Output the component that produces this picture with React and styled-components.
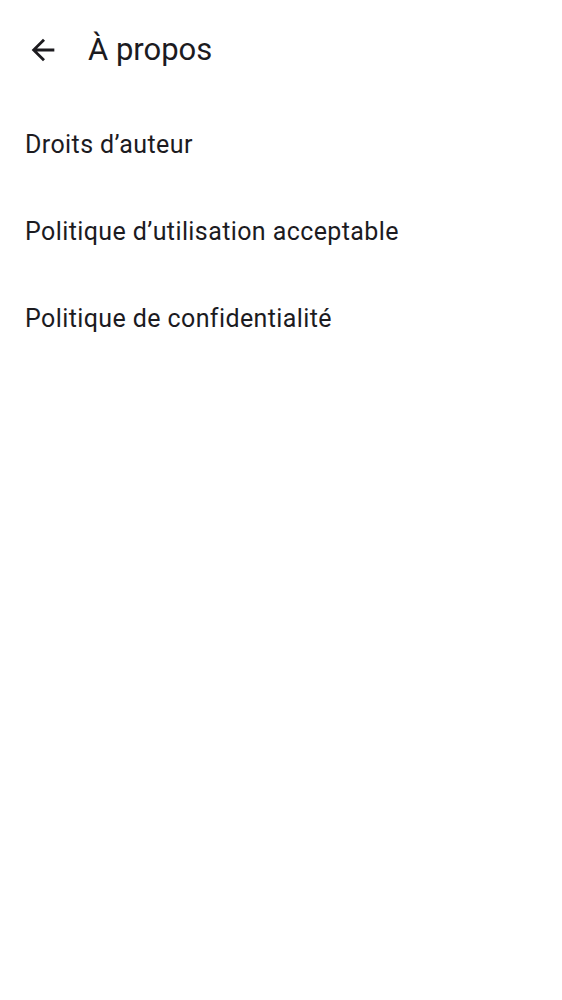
import React from "react";
import styled, { createGlobalStyle } from "styled-components";

const GlobalStyle = createGlobalStyle`
  html, body {
    margin: 0;
    padding: 0;
    background: #ffffff;
  }
  body {
    font-family: Roboto, "Noto Sans", sans-serif;
    color: #1c1b1f;
  }
`;

const Screen = styled.div`
  width: 562px;
  height: 1000px;
  background: #ffffff;
  display: flex;
  flex-direction: column;
`;

const TopBar = styled.header`
  height: 100px;
  display: flex;
  align-items: center;
  padding: 0 0 0 26px;
  box-sizing: border-box;
`;

const BackButton = styled.button`
  width: 34px;
  height: 34px;
  padding: 0;
  border: none;
  background: transparent;
  display: flex;
  align-items: center;
  justify-content: center;
  color: #1c1b1f;
  cursor: pointer;
`;

const Title = styled.h1`
  margin: 0 0 2px 28px;
  font-size: 31px;
  font-weight: 400;
  letter-spacing: 0;
  color: #1c1b1f;
`;

const List = styled.ul`
  list-style: none;
  margin: 1px 0 0;
  padding: 0;
`;

const Item = styled.li`
  height: 87px;
  display: flex;
  align-items: center;
  padding-left: 25px;
  font-size: 25px;
  letter-spacing: 0.4px;
  color: #1c1b1f;
  cursor: pointer;
`;

const BackIcon = () => (
  <svg width="34" height="34" viewBox="0 0 24 24" fill="currentColor">
    <path d="M20 11H7.83l5.59-5.59L12 4l-8 8 8 8 1.41-1.41L7.83 13H20v-2z" />
  </svg>
);

const links = [
  "Droits d’auteur",
  "Politique d’utilisation acceptable",
  "Politique de confidentialité",
];

export default function App() {
  return (
    <>
      <GlobalStyle />
      <Screen>
        <TopBar>
          <BackButton aria-label="Retour">
            <BackIcon />
          </BackButton>
          <Title>À propos</Title>
        </TopBar>
        <List>
          {links.map((label) => (
            <Item key={label}>{label}</Item>
          ))}
        </List>
      </Screen>
    </>
  );
}
